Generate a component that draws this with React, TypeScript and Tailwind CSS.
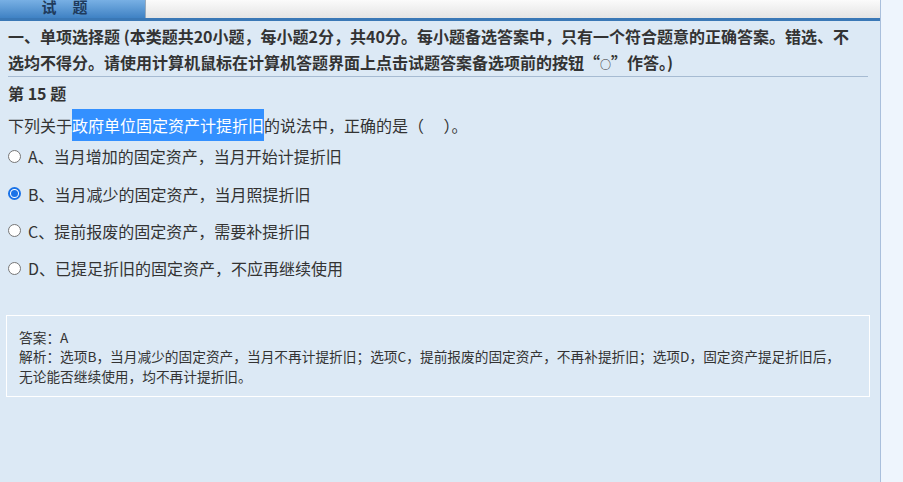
import React from 'react';

const options = [
  { key: 'A', text: 'A、当月增加的固定资产，当月开始计提折旧' },
  { key: 'B', text: 'B、当月减少的固定资产，当月照提折旧' },
  { key: 'C', text: 'C、提前报废的固定资产，需要补提折旧' },
  { key: 'D', text: 'D、已提足折旧的固定资产，不应再继续使用' },
];

export default function App() {
  const selected = 'B';

  return (
    <div
      className="flex h-[482px] w-[903px] overflow-hidden bg-[#eef5fd] text-[#333]"
      style={{ fontFamily: '"Noto Sans CJK SC", "Liberation Sans", sans-serif' }}
    >
      <div className="flex w-[881px] flex-col border-r border-[#a9bfdc] bg-[#dce9f5]">
        {/* Tabs */}
        <div className="flex h-[18px] bg-gradient-to-b from-[#fbfbfb] to-[#e4e4e4]">
          <div className="flex w-[146px] items-end justify-center border-r border-[#9ab] bg-gradient-to-b from-[#78b0e4] to-[#3f82c4] pb-[4px]">
            <span className="mt-[-10px] text-[15px] font-bold leading-none tracking-[16px] text-[#1f3b5c]">试题</span>
          </div>
          <div className="flex-1" />
        </div>
        <div className="h-[3px] bg-[#3a78b6]" />

        {/* Content */}
        <div className="flex flex-1 flex-col px-[8px]">
          <div className="pt-[2px] pr-[12px] text-[16px] font-bold leading-[26px]">
            一、单项选择题 (本类题共20小题，每小题2分，共40分。每小题备选答案中，只有一个符合题意的正确答案。错选、不选均不得分。请使用计算机鼠标在计算机答题界面上点击试题答案备选项前的按钮“<span className="text-[11px] leading-none">○</span>”作答。)
          </div>
          <div className="mt-[1px] mr-[4px] h-px bg-[#a6bbd2]" />
          <div className="mt-[4px] text-[16px] font-bold leading-[24px]">第 15 题</div>
          <div className="mt-[4px] text-[16px] leading-[32px]">
            下列关于<span className="inline-block bg-[#3390ff] leading-[32px] text-white">政府单位固定资产计提折旧</span>的说法中，正确的是（　 ）。
          </div>
          <div className="mt-[4px] flex flex-col gap-[15px]">
            {options.map((o) => (
              <label key={o.key} className="flex h-[22.4px] items-center text-[16px]">
                {selected === o.key ? (
                  <span className="mr-[7px] flex h-[13px] w-[13px] items-center justify-center rounded-full border-2 border-[#1a73e8] bg-white">
                    <span className="h-[7px] w-[7px] rounded-full bg-[#1a73e8]" />
                  </span>
                ) : (
                  <span className="mr-[7px] h-[13px] w-[13px] rounded-full border border-[#767676] bg-white" />
                )}
                <span>{o.text}</span>
              </label>
            ))}
          </div>

          <div className="mt-[35px] ml-[-2px] mr-[2px] border border-white pl-[12px] pr-[22px] pt-[12px] pb-[10px] text-[13.7px] leading-[19.5px]">
            <div>答案：A</div>
            <div>
              解析：选项B，当月减少的固定资产，当月不再计提折旧；选项C，提前报废的固定资产，不再补提折旧；选项D，固定资产提足折旧后，无论能否继续使用，均不再计提折旧。
            </div>
          </div>
        </div>
      </div>
      <div className="flex-1" />
    </div>
  );
}
